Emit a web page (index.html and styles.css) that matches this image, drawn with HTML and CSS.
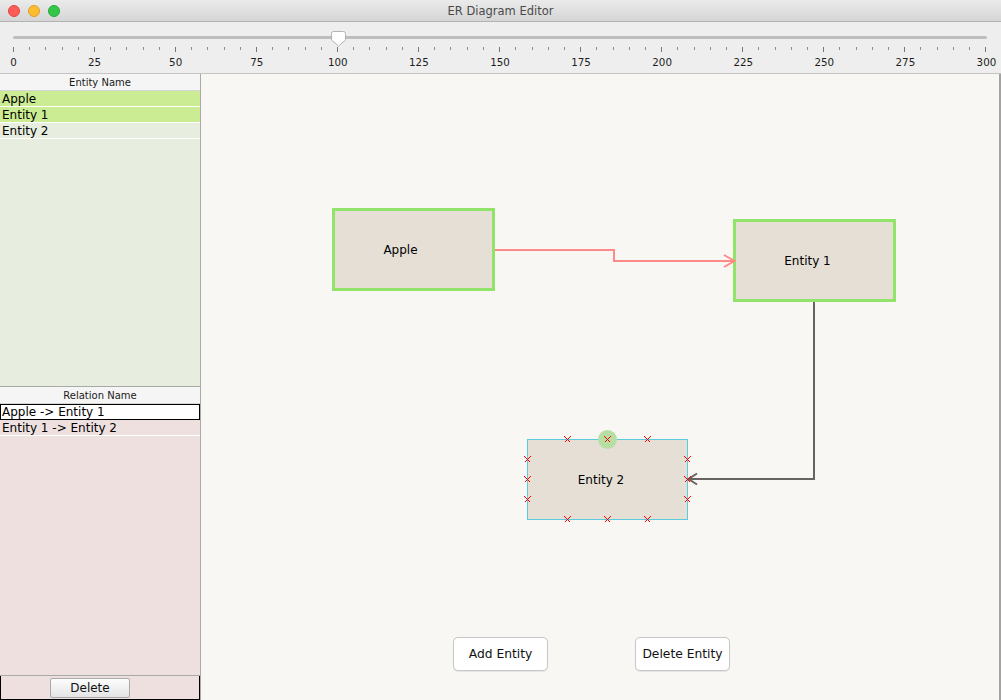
FILE: index.html
```html
<!DOCTYPE html>
<html>
<head>
<meta charset="utf-8">
<title>ER Diagram Editor</title>
<link rel="stylesheet" href="styles.css">
</head>
<body>
<div class="window">
  <header class="titlebar">
    <div class="lights">
      <span class="light red"></span>
      <span class="light yellow"></span>
      <span class="light green"></span>
    </div>
    <div class="title">ER Diagram Editor</div>
    <div></div>
  </header>

  <section class="zoombar">
    <div class="slider">
      <div class="track"></div>
      <svg class="thumb" width="17" height="17" viewBox="0 0 17 17">
        <path d="M1.5 3.5 Q1.5 1.5 3.5 1.5 H13.5 Q15.5 1.5 15.5 3.5 V10 L8.5 16 L1.5 10 Z" fill="#ffffff" stroke="#b3b3b3" stroke-width="1"/>
      </svg>
      <div class="ticks">
        <span class="t M"></span><span class="t"></span><span class="t"></span><span class="t"></span><span class="t"></span>
        <span class="t M"></span><span class="t"></span><span class="t"></span><span class="t"></span><span class="t"></span>
        <span class="t M"></span><span class="t"></span><span class="t"></span><span class="t"></span><span class="t"></span>
        <span class="t M"></span><span class="t"></span><span class="t"></span><span class="t"></span><span class="t"></span>
        <span class="t M"></span><span class="t"></span><span class="t"></span><span class="t"></span><span class="t"></span>
        <span class="t M"></span><span class="t"></span><span class="t"></span><span class="t"></span><span class="t"></span>
        <span class="t M"></span><span class="t"></span><span class="t"></span><span class="t"></span><span class="t"></span>
        <span class="t M"></span><span class="t"></span><span class="t"></span><span class="t"></span><span class="t"></span>
        <span class="t M"></span><span class="t"></span><span class="t"></span><span class="t"></span><span class="t"></span>
        <span class="t M"></span><span class="t"></span><span class="t"></span><span class="t"></span><span class="t"></span>
        <span class="t M"></span><span class="t"></span><span class="t"></span><span class="t"></span><span class="t"></span>
        <span class="t M"></span><span class="t"></span><span class="t"></span><span class="t"></span><span class="t"></span>
        <span class="t M"></span>
      </div>
      <div class="labels">
        <span>0</span><span>25</span><span>50</span><span>75</span><span>100</span><span>125</span><span>150</span><span>175</span><span>200</span><span>225</span><span>250</span><span>275</span><span>300</span>
      </div>
    </div>
  </section>

  <main class="main">
    <aside class="sidebar">
      <div class="table entities">
        <div class="th">Entity Name</div>
        <div class="row picked">Apple</div>
        <div class="row picked">Entity 1</div>
        <div class="row">Entity 2</div>
      </div>
      <div class="table relations">
        <div class="th">Relation Name</div>
        <div class="row focus">Apple -&gt; Entity 1</div>
        <div class="row">Entity 1 -&gt; Entity 2</div>
      </div>
      <div class="actions">
        <button class="small-btn">Delete</button>
      </div>
    </aside>

    <div class="canvas">
      <svg class="diagram" width="798" height="563" viewBox="201 74 798 563">
        <defs>
          <path id="cross" d="M-3 -3 L3 3 M3 -3 L-3 3" stroke="#ff0000" stroke-width="1" fill="none"/>
        </defs>

        <rect x="333.5" y="209.5" width="160" height="80" fill="#e5dfd6" stroke="#92e36a" stroke-width="3"/>
        <text x="400.5" y="253.5" class="label">Apple</text>

        <rect x="734.5" y="220.5" width="160" height="80" fill="#e5dfd6" stroke="#92e36a" stroke-width="3"/>
        <text x="807.5" y="265" class="label">Entity 1</text>

        <rect x="527.5" y="439.5" width="160" height="80" fill="#e5dfd6" stroke="#5ccbdb" stroke-width="1"/>
        <text x="601" y="484" class="label">Entity 2</text>

        <g class="wire">
          <path d="M495 250 H614 V261 H734" stroke="#ff8a8a"/>
          <path d="M724 255 L734.5 261 L724 267" stroke="#ff8a8a"/>

          <path d="M814 302 V479 H689" stroke="#676361"/>
          <path d="M697 473.5 L688.5 479 L697 484.5" stroke="#676361"/>
        </g>

        <circle cx="607.5" cy="439.5" r="9.5" fill="#b7dea3"/>

        <g class="crosses">
          <use href="#cross" x="567.5" y="439.5"/>
          <use href="#cross" x="607.5" y="439.5"/>
          <use href="#cross" x="647.5" y="439.5"/>
          <use href="#cross" x="567.5" y="519.5"/>
          <use href="#cross" x="607.5" y="519.5"/>
          <use href="#cross" x="647.5" y="519.5"/>
          <use href="#cross" x="527.5" y="459.5"/>
          <use href="#cross" x="527.5" y="479.5"/>
          <use href="#cross" x="527.5" y="499.5"/>
          <use href="#cross" x="687.5" y="459.5"/>
          <use href="#cross" x="687.5" y="479.5"/>
          <use href="#cross" x="687.5" y="499.5"/>
        </g>
      </svg>
      <div class="buttons">
        <button class="btn">Add Entity</button>
        <button class="btn">Delete Entity</button>
      </div>
    </div>
  </main>
</div>
</body>
</html>
```

FILE: styles.css
```css
* { box-sizing: border-box; }

html, body {
  margin: 0;
  padding: 0;
  width: 1001px;
  height: 700px;
  overflow: hidden;
  background: #eeeeee;
  font-family: "DejaVu Sans", "Liberation Sans", sans-serif;
}

.window {
  width: 1001px;
  height: 700px;
  display: flex;
  flex-direction: column;
}

/* Title bar */
.titlebar {
  height: 22px;
  flex: none;
  display: grid;
  grid-template-columns: 1fr auto 1fr;
  align-items: center;
  background: linear-gradient(#ebebeb, #d5d5d5);
  border-bottom: 1px solid #b3b3b3;
}
.lights {
  display: flex;
  gap: 8px;
  padding-left: 8px;
}
.light {
  width: 12px;
  height: 12px;
  border-radius: 50%;
}
.light.red { background: #fc5b57; border: 1px solid #e14640; }
.light.yellow { background: #fdbc2f; border: 1px solid #de9f26; }
.light.green { background: #33c748; border: 1px solid #27aa35; }
.title {
  font-size: 11.5px;
  color: #4a4a4a;
  padding-top: 1px;
}

/* Zoom slider */
.zoombar {
  height: 52px;
  flex: none;
  background: #eeeeee;
  border-bottom: 1px solid #c4c4c4;
  padding-top: 14px;
}
.slider {
  position: relative;
  margin-left: 13px;
  width: 974px;
}
.track {
  height: 3px;
  background: #bdbdbd;
  border-radius: 2px;
}
.thumb {
  position: absolute;
  left: 317px;
  top: -6px;
}
.ticks {
  margin-top: 8px;
  height: 5px;
  display: flex;
  justify-content: space-between;
  align-items: flex-start;
}
.t {
  width: 1px;
  height: 3px;
  background: #8c8c8c;
}
.t.M {
  height: 5px;
  background: #777777;
}
.labels {
  margin-top: 4px;
  margin-left: -19.5px;
  width: 1013px;
  display: flex;
  justify-content: space-between;
  font-size: 10.3px;
  line-height: 12px;
  color: #1e1e1e;
}
.labels span {
  width: 40px;
  text-align: center;
}

/* Main area */
.main {
  flex: 1;
  display: flex;
  min-height: 0;
}

.sidebar {
  width: 201px;
  flex: none;
  display: flex;
  flex-direction: column;
  border-right: 1px solid #a9a9a9;
}
.table {
  font-size: 12px;
  color: #000;
}
.entities {
  height: 313px;
  flex: none;
  background: #e8eedf;
  border-bottom: 1px solid #a9a9a9;
}
.relations {
  flex: 1;
  background: #efe0e0;
  border-bottom: 1px solid #a9a9a9;
}
.th {
  height: 17px;
  background: #f5f5f5;
  border-bottom: 1px solid #d6d6d6;
  font-size: 10px;
  line-height: 17px;
  text-align: center;
  color: #1a1a1a;
}
.row {
  height: 16px;
  line-height: 16px;
  padding-left: 2px;
  border-bottom: 1px solid #ffffff;
  white-space: nowrap;
}
.row.picked {
  background: #cbec93;
}
.row.focus {
  background: #ffffff;
  border: 1px solid #000000;
  padding-left: 1px;
  line-height: 14px;
}

.actions {
  height: 24px;
  flex: none;
  background: #efe0e0;
  border: 1px solid #000000;
  border-top: none;
  padding-left: 49px;
  padding-top: 2px;
  display: flex;
  align-items: flex-start;
}
.small-btn {
  width: 80px;
  height: 20px;
  padding: 0;
  font-family: "DejaVu Sans", sans-serif;
  font-size: 12px;
  color: #111;
  background: linear-gradient(#fdfdfd, #e4e4e4);
  border: 1px solid #a9a9a9;
  border-radius: 2px;
}

/* Canvas */
.canvas {
  flex: 1;
  display: flex;
  flex-direction: column;
  background: #f8f7f3;
  border-right: 2px solid #a3a3a3;
}
.diagram {
  display: block;
  flex: none;
}
.wire path {
  fill: none;
  stroke-width: 2;
}
.crosses {
  shape-rendering: crispEdges;
}
.label {
  font-family: "DejaVu Sans", sans-serif;
  font-size: 12px;
  fill: #000;
  text-anchor: middle;
}
.buttons {
  height: 34px;
  flex: none;
  display: flex;
  gap: 87px;
  padding-left: 252px;
}
.btn {
  width: 95px;
  height: 34px;
  padding: 0;
  font-family: "DejaVu Sans", sans-serif;
  font-size: 12.3px;
  color: #111;
  background: #ffffff;
  border: 1px solid #c8c8c8;
  border-radius: 5px;
  box-shadow: 0 0.5px 1px rgba(0, 0, 0, 0.08);
}
```
